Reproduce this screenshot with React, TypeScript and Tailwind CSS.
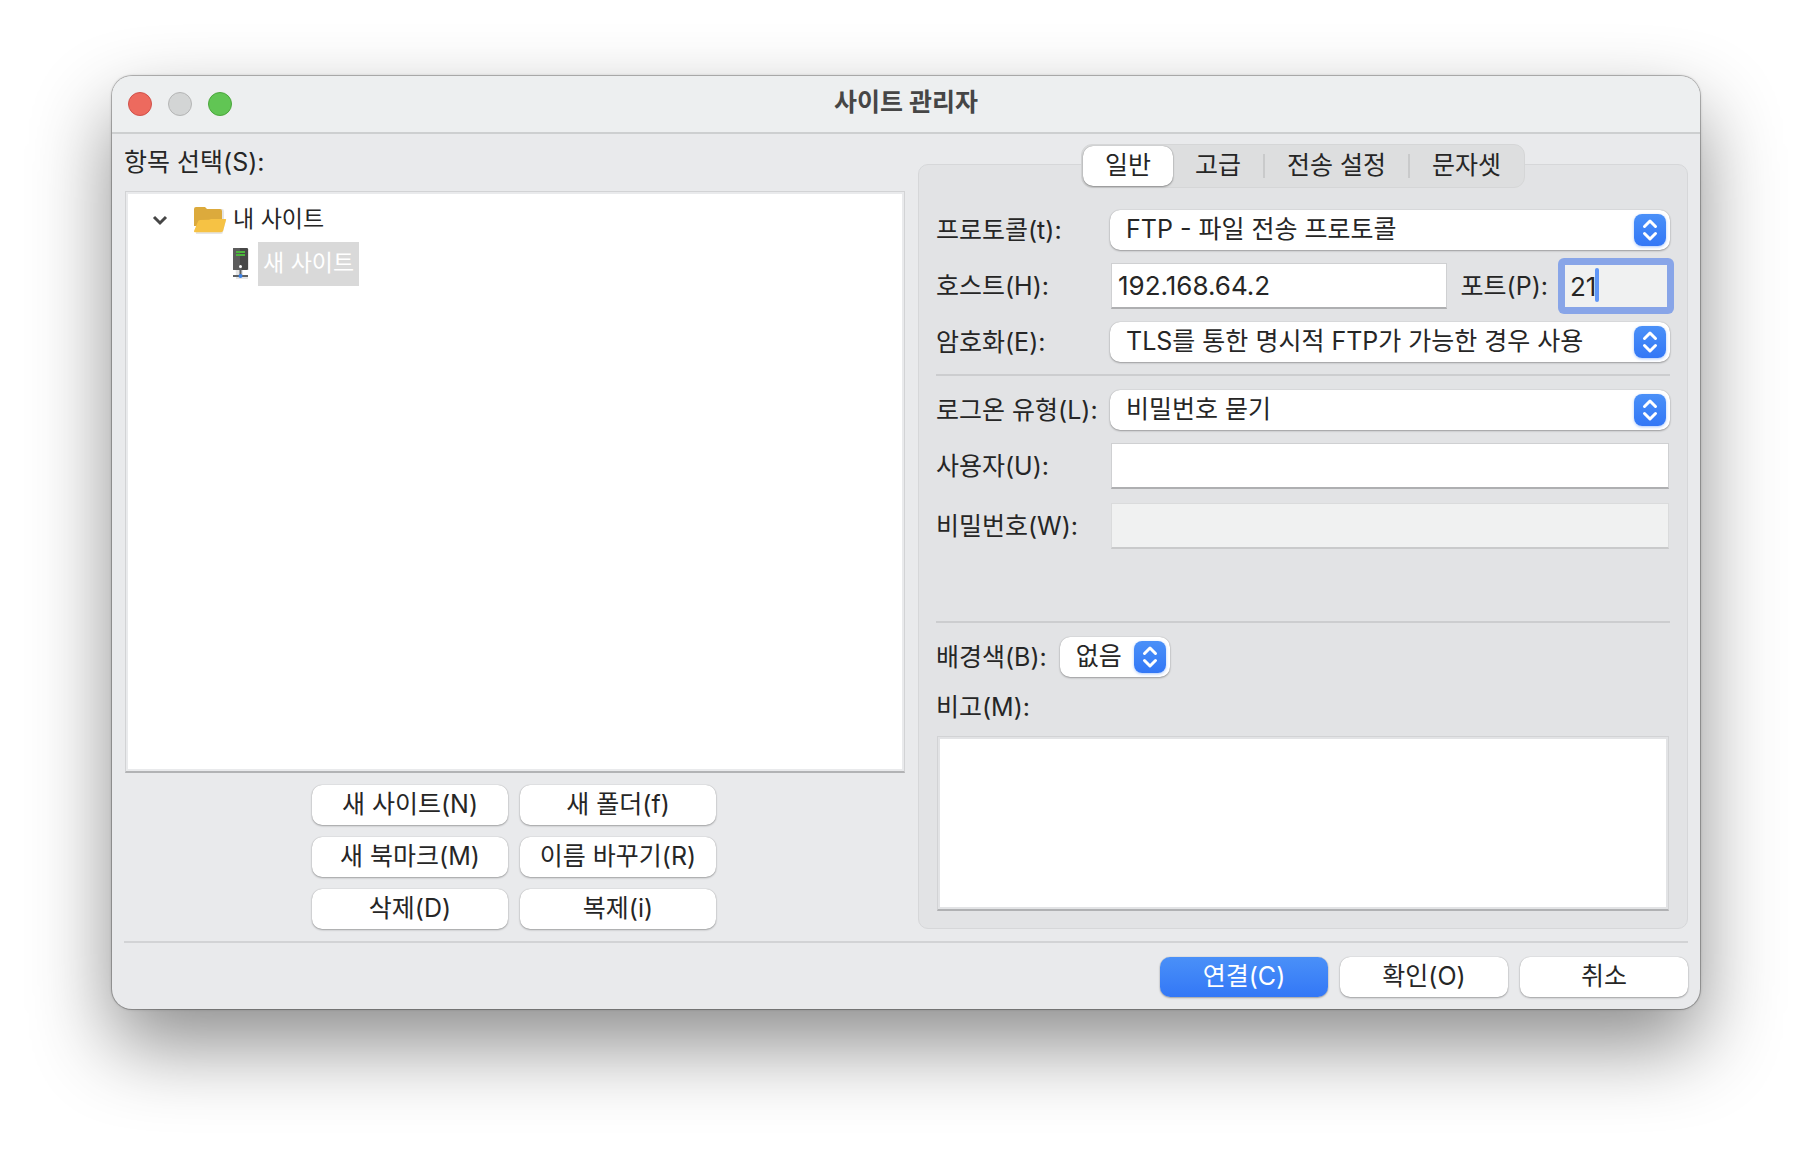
import React from "react";
import clsx from "clsx";

const tabs = ["일반", "고급", "전송 설정", "문자셋"];

const siteActions = [
  "새 사이트(N)",
  "새 폴더(f)",
  "새 북마크(M)",
  "이름 바꾸기(R)",
  "삭제(D)",
  "복제(i)",
];

const fieldClass =
  "block h-[46px] min-w-0 border border-b-2 border-[#cfd0d2] border-b-[#aeafb1] px-[6px] text-[26px] text-[#262626] outline-none";

const buttonClass =
  "h-10 rounded-[10px] pb-[2px] leading-8 shadow-[0_1px_2px_rgba(0,0,0,0.3),0_0_1px_rgba(0,0,0,0.3)]";

function FolderIcon() {
  return (
    <svg width="34" height="30" viewBox="0 0 34 30" aria-hidden="true">
      <path d="M3 4h26a2 2 0 0 1 2 2v9h2l-3 12a2 2 0 0 1-2 2H3z" fill="#000" opacity="0.1" />
      <path d="M1 4a2 2 0 0 1 2-2h9l2 2h13a2 2 0 0 1 2 2v15H1z" fill="#dcaa3c" />
      <path d="M5 16.500q.4-1.500 2-1.500l9-.200 2-.800h14.500q.8 0 .6.800l-3 11q-.4 1.400-2 1.400H2q-1.200 0-1-1.200z" fill="#f6c244" />
    </svg>
  );
}

function ServerIcon() {
  return (
    <svg width="18" height="34" viewBox="0 0 18 34" aria-hidden="true">
      <path d="M3 2h14v21h-6v6h5v3H4z" fill="#000" opacity="0.1" />
      <rect x="1" y="1" width="15" height="22" rx="1" fill="#474747" />
      <rect x="1" y="1" width="7" height="22" rx="1" fill="#5c5c5c" />
      <path d="M4 5h9M4 8h9" stroke="#4cb53c" strokeWidth="2" />
      <path d="M8.500 19v9M1 29h15" stroke="#5f6163" strokeWidth="2" />
      <circle cx="8.500" cy="19.500" r="1.500" fill="#fff" />
      <circle cx="8.500" cy="29" r="2" fill="#3b82e8" />
    </svg>
  );
}

function Stepper() {
  return (
    <span className="pointer-events-none absolute top-1 right-1 flex size-8 items-center justify-center rounded-lg bg-linear-to-b from-[#4a90f8] to-[#3377f6] shadow-[0_1px_3px_rgba(51,119,246,0.4)]">
      <svg width="18" height="24" viewBox="0 0 18 24" fill="none" aria-hidden="true">
        <path
          d="M3.500 8.500 9 3l5.500 5.500M3.500 15.500 9 21l5.500-5.500"
          stroke="#fff"
          strokeWidth="3"
          strokeLinecap="round"
          strokeLinejoin="round"
        />
      </svg>
    </span>
  );
}

function Combo({ id, value }: { id: string; value: string }) {
  return (
    <div className="relative min-w-0 flex-1">
      <select
        id={id}
        className="block h-10 w-full appearance-none rounded-[10px] bg-white pr-10 pb-px pl-4 text-[25px] text-[#262626] shadow-[0_1px_2px_rgba(0,0,0,0.3),0_0_1px_rgba(0,0,0,0.3)] outline-none"
      >
        <option>{value}</option>
      </select>
      <Stepper />
    </div>
  );
}

function Row({
  id,
  label,
  className,
  children,
}: {
  id: string;
  label: string;
  className?: string;
  children: React.ReactNode;
}) {
  return (
    <div className={clsx("flex items-center", className)}>
      <label htmlFor={id} className="w-[174px] shrink-0 leading-8 whitespace-nowrap">
        {label}
      </label>
      {children}
    </div>
  );
}

function TitleBar() {
  return (
    <header className="grid h-[58px] grid-cols-[1fr_auto_1fr] items-center border-b-2 border-[#cdcfd0] bg-[#edeff0] px-4">
      <div className="flex gap-4">
        <button aria-label="닫기" className="size-6 rounded-full border border-[#d0514a] bg-[#ed6a5e]" />
        <button aria-label="최소화" className="size-6 rounded-full border border-[#b4b5b5] bg-[#d3d5d5]" />
        <button aria-label="확대" className="size-6 rounded-full border border-[#4ba63c] bg-[#61c554]" />
      </div>
      <h1 className="pb-1 leading-8 font-bold text-[#464646]">사이트 관리자</h1>
    </header>
  );
}

function SiteTree() {
  return (
    <div className="mx-px flex-1 border border-b-2 border-[#d2d3d5] border-b-[#b2b3b5] p-[2px]">
      <ul role="tree" className="h-full bg-white pt-1 text-[23px] leading-8">
        <li role="treeitem" aria-expanded="true">
          <div className="flex h-11 items-center pl-6">
            <svg width="16" height="12" viewBox="0 0 16 12" fill="none" aria-hidden="true">
              <path d="m2 3 6 6 6-6" stroke="#464646" strokeWidth="3" />
            </svg>
            <span className="ml-[25px] flex">
              <FolderIcon />
            </span>
            <span className="ml-[6px] pb-[2px]">내 사이트</span>
          </div>
          <ul role="group">
            <li role="treeitem" aria-selected="true" className="flex h-11 items-center pl-[104px]">
              <ServerIcon />
              <span className="ml-2 flex h-11 items-center bg-[#d9d9d9] px-[5px] pb-[2px] text-white">
                새 사이트
              </span>
            </li>
          </ul>
        </li>
      </ul>
    </div>
  );
}

function SitePanel() {
  return (
    <section className="mt-[30px] min-w-0 rounded-[10px] border border-[#d6d7d9] bg-[#e2e3e5] px-[17px] pb-[17px]">
      <div
        role="tablist"
        className="mx-auto -mt-[21px] flex h-11 w-fit items-center rounded-[11px] border border-[#d5d6d7] bg-[#dddedf] p-px"
      >
        {tabs.map((tab, i) => (
          <React.Fragment key={tab}>
            {i > 1 && <span className="h-6 w-[2px] bg-[#c9cacb]" />}
            <button
              role="tab"
              aria-selected={i === 0}
              className={clsx(
                "h-10 px-[22px] pb-[2px] leading-8",
                i === 0 && "rounded-[10px] bg-white shadow-[0_1px_2px_rgba(0,0,0,0.35),0_0_1px_rgba(0,0,0,0.4)]"
              )}
            >
              {tab}
            </button>
          </React.Fragment>
        ))}
      </div>

      <Row id="protocol" label="프로토콜(t):" className="mt-[22px]">
        <Combo id="protocol" value="FTP - 파일 전송 프로토콜" />
      </Row>
      <Row id="host" label="호스트(H):" className="mt-[13px]">
        <input id="host" defaultValue="192.168.64.2" className={clsx(fieldClass, "ml-px flex-1 bg-white")} />
        <label htmlFor="port" className="ml-[14px] leading-8">
          포트(P):
        </label>
        <div className="relative -my-[6px] -mr-1 ml-[10px] rounded-md bg-[#88a5e8] p-[7px]">
          <input
            id="port"
            defaultValue="21"
            className="block h-[42px] w-[102px] bg-[#f0f1f1] px-[5px] text-[26px] text-[#262626] outline-none"
          />
          <span className="absolute top-[10px] left-[37px] h-[34px] w-1 rounded-full bg-[#5f96f7]" />
        </div>
      </Row>
      <Row id="encryption" label="암호화(E):" className="mt-[13px]">
        <Combo id="encryption" value="TLS를 통한 명시적 FTP가 가능한 경우 사용" />
      </Row>

      <hr className="mt-3 border-t-2 border-[#cccdcf]" />

      <Row id="logon" label="로그온 유형(L):" className="mt-[14px]">
        <Combo id="logon" value="비밀번호 묻기" />
      </Row>
      <Row id="user" label="사용자(U):" className="mt-[13px]">
        <input id="user" className={clsx(fieldClass, "mx-px flex-1 bg-white")} />
      </Row>
      <Row id="password" label="비밀번호(W):" className="mt-[14px]">
        <input
          id="password"
          type="password"
          disabled
          className="mx-px block h-[46px] min-w-0 flex-1 border border-b-2 border-[#dadbdc] border-b-[#c9cacb] bg-[#f0f1f1]"
        />
      </Row>

      <hr className="mt-[72px] border-t-2 border-[#cccdcf]" />

      <div className="mt-[14px] flex items-center gap-[13px]">
        <label htmlFor="color" className="leading-8">
          배경색(B):
        </label>
        <div className="flex w-[110px]">
          <Combo id="color" value="없음" />
        </div>
      </div>

      <label htmlFor="memo" className="mt-[14px] block leading-8">
        비고(M):
      </label>
      <div className="mx-px mt-[13px] border border-b-2 border-[#d2d3d5] border-b-[#b0b1b3] p-[2px]">
        <textarea id="memo" className="block h-[168px] w-full resize-none bg-white outline-none" />
      </div>
    </section>
  );
}

export default function App() {
  return (
    <div className="min-h-screen bg-white px-28 pt-[76px] pb-[148px] font-['Inter','Noto_Sans_CJK_KR',sans-serif] text-[25px] text-[#262626]">
      <main className="overflow-hidden rounded-[20px] bg-[#e9eaec] shadow-[0_0_0_1px_rgba(0,0,0,0.2),0_0_3px_rgba(0,0,0,0.3),0_36px_80px_rgba(0,0,0,0.45)]">
        <TitleBar />

        <div className="px-3 pb-3">
          <div className="grid grid-cols-[minmax(0,391fr)_minmax(0,385fr)] gap-3">
            <div className="flex flex-col">
              <h2 className="mt-3 mb-[13px] leading-8">항목 선택(S):</h2>
              <SiteTree />
              <div className="mx-auto mt-3 grid grid-cols-[196px_196px] gap-3 pr-[2px]">
                {siteActions.map((action) => (
                  <button key={action} className={clsx(buttonClass, "bg-white")}>
                    {action}
                  </button>
                ))}
              </div>
            </div>
            <SitePanel />
          </div>

          <hr className="mt-3 border-t-2 border-[#d2d3d5]" />

          <footer className="mt-[14px] flex justify-end gap-3">
            <button
              className={clsx(buttonClass, "w-[168px] bg-linear-to-b from-[#4a90f8] to-[#3377f6] text-white")}
            >
              연결(C)
            </button>
            <button className={clsx(buttonClass, "w-[168px] bg-white")}>확인(O)</button>
            <button className={clsx(buttonClass, "w-[168px] bg-white")}>취소</button>
          </footer>
        </div>
      </main>
    </div>
  );
}
